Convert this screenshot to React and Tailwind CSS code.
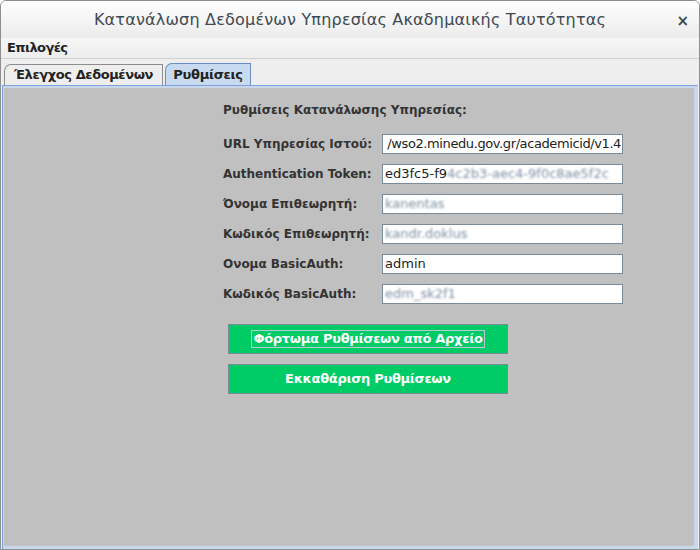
import React from 'react';

const font = { fontFamily: '"DejaVu Sans", "Noto Sans", sans-serif' };

const rows = [
  { label: 'URL Υπηρεσίας Ιστού:', value: '/wso2.minedu.gov.gr/academicid/v1.4', end: true },
  { label: 'Authentication Token:', value: 'ed3fc5-f9', blurred: '4c2b3-aec4-9f0c8ae5f2c' },
  { label: 'Όνομα Επιθεωρητή:', blurred: 'kanentas' },
  { label: 'Κωδικός Επιθεωρητή:', blurred: 'kandr.doklus' },
  { label: 'Ονομα BasicAuth:', value: 'admin' },
  { label: 'Κωδικός BasicAuth:', blurred: 'edm_sk2f1' },
];

const Field = ({ value, blurred, end }) => (
  <div
    className={
      end
        ? 'w-[241px] h-[20px] bg-white border border-[#7a8a99] flex items-center justify-end overflow-hidden whitespace-nowrap pr-[1px] text-[13px] tracking-[-0.4px] text-[#222]'
        : 'w-[241px] h-[20px] bg-white border border-[#7a8a99] flex items-center overflow-hidden whitespace-nowrap pl-[2px] text-[13px] text-[#222]'
    }
  >
    {value && <span className="shrink-0">{value}</span>}
    {blurred && <span className="text-[#7d8fa3] blur-[1.2px]">{blurred}</span>}
  </div>
);

const App = () => {
  return (
    <div style={font} className="w-[700px] h-[550px] flex flex-col bg-[#eeeeee] border border-[#8f8f8f] rounded-t-[6px] overflow-hidden">
      {/* Title bar */}
      <div className="h-[37px] shrink-0 flex items-center relative bg-gradient-to-b from-[#ffffff] to-[#ebebeb]">
        <div className="flex-1 text-center text-[16px] text-[#3e4a52] tracking-[0.2px]">
          Κατανάλωση Δεδομένων Υπηρεσίας Ακαδημαικής Ταυτότητας
        </div>
        <div className="absolute right-[10px] top-[9px] text-[15px] font-bold text-[#3e4a52]">×</div>
      </div>

      {/* Menu bar */}
      <div className="h-[21px] shrink-0 flex items-center px-[6px] bg-gradient-to-b from-[#f7f7f7] to-[#ededed] border-b border-[#d0d0d0]">
        <span className="text-[13px] font-bold text-[#222] tracking-[-0.6px]">Επιλογές</span>
      </div>

      {/* Tabs */}
      <div className="h-[25px] shrink-0 flex items-end pl-[3px] gap-[2px] mt-[1px]">
        <div className="h-[21px] w-[159px] flex items-center justify-center bg-[#eeeeee] border border-b-0 border-[#8c8c8c] rounded-tl-[7px] text-[13px] font-bold text-[#222] tracking-[-0.4px]">
          Έλεγχος Δεδομένων
        </div>
        <div className="h-[22px] w-[86px] flex items-center justify-center bg-[#c8daef] border border-b-0 border-[#6a8cc7] rounded-tl-[7px] text-[13px] font-bold text-[#222] tracking-[-0.3px]">
          Ρυθμίσεις
        </div>
      </div>

      {/* Content panel */}
      <div className="flex-1 mx-[1px] border-l border-t border-[#7f9fdf] border-r-[#c8d8e8] border-r">
        <div className="h-full border-[3px] border-[#c8d8e8] border-l-[1px] border-t-[2px] bg-[#c0c0c0] pl-[219px] pt-[13px]">
          <div className="text-[12px] font-bold text-[#333]">Ρυθμίσεις Κατανάλωσης Υπηρεσίας:</div>
          <div className="mt-[15px] flex flex-col gap-[10px]">
            {rows.map((r) => (
              <div key={r.label} className="flex items-center h-[20px]">
                <div className="w-[159px] text-[12px] font-bold text-[#333] whitespace-nowrap">{r.label}</div>
                <Field value={r.value} blurred={r.blurred} end={r.end} />
              </div>
            ))}
          </div>
          <div className="ml-[5px] mt-[20px] flex flex-col gap-[10px]">
            <button className="w-[280px] h-[30px] bg-[#00cc66] border border-[#7a8a99] flex items-center justify-center text-white text-[13px] font-bold tracking-[-0.3px]">
              <span className="border border-[#b8c8d8] px-[1px] leading-[16px]">Φόρτωμα Ρυθμίσεων από Αρχείο</span>
            </button>
            <button className="w-[280px] h-[30px] bg-[#00cc66] border border-[#7a8a99] flex items-center justify-center text-white text-[13px] font-bold tracking-[-0.3px]">
              Εκκαθάριση Ρυθμίσεων
            </button>
          </div>
        </div>
      </div>
    </div>
  );
};

export default App;
